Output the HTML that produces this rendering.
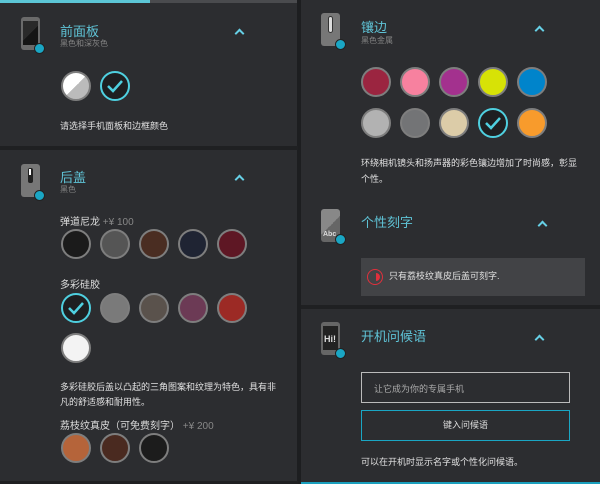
<!DOCTYPE html>
<html><head><meta charset="utf-8"><style>
*{margin:0;padding:0;box-sizing:border-box}
body{width:600px;height:484px;background:#2c2d30;font-family:"Liberation Sans","Noto Sans CJK SC",sans-serif;position:relative;overflow:hidden;color:#ddd}
.a{position:absolute;white-space:nowrap}
.t{color:#5fc3d6;font-size:13px}
.s{color:#858585;font-size:8px}
.p{font-size:9px;color:#e0e0e0}
.c{position:absolute;width:30px;height:30px;border-radius:50%;border:2px solid #7e7e7e}
.sel{border:2px solid #4fd0e0;background:#1e1f21}
.chev{position:absolute;width:7px;height:7px;border-left:2.5px solid #66d0e6;border-top:2.5px solid #66d0e6;transform:rotate(45deg)}
.badge{position:absolute;width:11px;height:11px;border-radius:50%;background:#1aa6c4;border:1px solid #222}
.ph{position:absolute;width:19px;height:33px;background:#6a6a6a;border-radius:3px}
</style></head><body>
<div class="a" style="left:0;top:0;width:298px;height:3px;background:#4a4b4e"></div>
<div class="a" style="left:0;top:0;width:150px;height:3px;background:#5cc6d6"></div>
<div class="a" style="left:297px;top:0;width:4px;height:484px;background:#1d1e20"></div>
<div class="a" style="left:0;top:146px;width:298px;height:4px;background:#1f2022"></div>
<div class="a" style="left:0;top:481px;width:298px;height:3px;background:#1f2022"></div>

<!-- left sec 1 -->
<div class="ph" style="left:21px;top:17px"><div style="position:absolute;left:2px;top:4px;width:15px;height:24px;background:linear-gradient(135deg,#2a2a2a 50%,#151515 50%)"></div></div>
<div class="badge" style="left:34px;top:43px"></div>
<div class="a t" style="left:60px;top:21px">前面板</div>
<div class="a s" style="left:60px;top:38px">黑色和深灰色</div>
<div class="chev" style="left:236px;top:30px"></div>
<div class="c" style="left:61px;top:71px;background:linear-gradient(135deg,#fff 50%,#bbb 50%)"></div>
<div class="c sel" style="left:100px;top:71px"></div>
<svg class="a" style="left:100px;top:71px" width="30" height="30"><path d="M8 15l5 5 9-10" stroke="#4fd0e0" stroke-width="2.5" fill="none"/></svg>
<div class="a p" style="left:60px;top:119px">请选择手机面板和边框颜色</div>

<!-- left sec 2 -->
<div class="ph" style="left:21px;top:164px;background:#777"><div style="position:absolute;left:7px;top:4px;width:5px;height:15px;background:#222;border-radius:2px"></div><div style="position:absolute;left:8px;top:5px;width:2px;height:6px;background:#fff"></div></div>
<div class="badge" style="left:34px;top:190px"></div>
<div class="a t" style="left:60px;top:167px">后盖</div>
<div class="a s" style="left:60px;top:184px">黑色</div>
<div class="chev" style="left:236px;top:176px"></div>
<div class="a" style="left:60px;top:213px;font-size:10px;color:#ddd">弹道尼龙 <span style="color:#888">+¥ 100</span></div>
<div class="c" style="left:61px;top:229px;background:#1b1b1b"></div>
<div class="c" style="left:100px;top:229px;background:#555"></div>
<div class="c" style="left:139px;top:229px;background:#4a2d22"></div>
<div class="c" style="left:178px;top:229px;background:#1f2433"></div>
<div class="c" style="left:217px;top:229px;background:#5e1724"></div>
<div class="a" style="left:60px;top:276px;font-size:10px;color:#ddd">多彩硅胶</div>
<div class="c sel" style="left:61px;top:293px"></div>
<svg class="a" style="left:61px;top:293px" width="30" height="30"><path d="M8 15l5 5 9-10" stroke="#4fd0e0" stroke-width="2.5" fill="none"/></svg>
<div class="c" style="left:100px;top:293px;background:#7a7a7a"></div>
<div class="c" style="left:139px;top:293px;background:#5a524c"></div>
<div class="c" style="left:178px;top:293px;background:#6c3a55"></div>
<div class="c" style="left:217px;top:293px;background:#9c2a25"></div>
<div class="c" style="left:61px;top:333px;background:#f3f3f3"></div>
<div class="a p" style="left:60px;top:380px;line-height:15px">多彩硅胶后盖以凸起的三角图案和纹理为特色，具有非<br>凡的舒适感和耐用性。</div>
<div class="a" style="left:60px;top:417px;font-size:10px;color:#ddd">荔枝纹真皮（可免费刻字） <span style="color:#888">+¥ 200</span></div>
<div class="c" style="left:61px;top:433px;background:#b5643a"></div>
<div class="c" style="left:100px;top:433px;background:#4a2a20"></div>
<div class="c" style="left:139px;top:433px;background:#1c1c1c"></div>

<!-- right sec 1 -->
<div class="ph" style="left:321px;top:13px;background:#777"><div style="position:absolute;left:7px;top:3px;width:5px;height:17px;background:#ddd;border-radius:3px;border:1px solid #333"></div></div>
<div class="badge" style="left:335px;top:39px"></div>
<div class="a t" style="left:361px;top:17px">镶边</div>
<div class="a s" style="left:361px;top:35px">黑色金属</div>
<div class="chev" style="left:536px;top:27px"></div>
<div class="c" style="left:361px;top:67px;background:#9b2540"></div>
<div class="c" style="left:400px;top:67px;background:#f7819f"></div>
<div class="c" style="left:439px;top:67px;background:#a3318e"></div>
<div class="c" style="left:478px;top:67px;background:#d7e206"></div>
<div class="c" style="left:517px;top:67px;background:#0084cb"></div>
<div class="c" style="left:361px;top:108px;background:#b2b2b2"></div>
<div class="c" style="left:400px;top:108px;background:#737476"></div>
<div class="c" style="left:439px;top:108px;background:#dccca8"></div>
<div class="c sel" style="left:478px;top:108px"></div>
<svg class="a" style="left:478px;top:108px" width="30" height="30"><path d="M8 15l5 5 9-10" stroke="#4fd0e0" stroke-width="2.5" fill="none"/></svg>
<div class="c" style="left:517px;top:108px;background:#f89b2c"></div>
<div class="a p" style="left:361px;top:155px;line-height:16px">环绕相机镜头和扬声器的彩色镶边增加了时尚感，彰显<br>个性。</div>

<!-- right sec 2 -->
<div class="ph" style="left:321px;top:209px;background:linear-gradient(135deg,#888 50%,#666 50%)"><div style="position:absolute;left:2px;top:22px;font-size:7px;color:#ddd;font-weight:bold">Abc</div></div>
<div class="badge" style="left:335px;top:234px"></div>
<div class="a t" style="left:361px;top:212px">个性刻字</div>
<div class="chev" style="left:539px;top:222px"></div>
<div class="a" style="left:361px;top:258px;width:224px;height:38px;background:#424346"></div>
<div class="a" style="left:367px;top:269px;width:16px;height:16px;border-radius:50%;border:1.5px solid #e0303c"></div>
<div class="a" style="left:376px;top:273px;width:4px;height:8px;background:#e0303c;border-radius:0 4px 4px 0"></div>
<div class="a" style="left:389px;top:269px;font-size:9px;color:#e0e0e0">只有荔枝纹真皮后盖可刻字.</div>
<div class="a" style="left:301px;top:305px;width:299px;height:4px;background:#1f2022"></div>

<!-- right sec 3 -->
<div class="ph" style="left:321px;top:322px;background:#666"><div style="position:absolute;left:2px;top:4px;width:15px;height:24px;background:#222"></div><div style="position:absolute;left:3px;top:12px;font-size:9px;color:#ddd;font-weight:bold">Hi!</div></div>
<div class="badge" style="left:335px;top:348px"></div>
<div class="a t" style="left:361px;top:326px">开机问候语</div>
<div class="chev" style="left:536px;top:336px"></div>
<div class="a" style="left:361px;top:372px;width:209px;height:31px;border:1.5px solid #bbb"></div>
<div class="a" style="left:374px;top:382px;font-size:9px;color:#aaa">让它成为你的专属手机</div>
<div class="a" style="left:361px;top:410px;width:209px;height:31px;border:1.5px solid #1aa6c4;text-align:center;line-height:28px;font-size:9px;color:#ddd">键入问候语</div>
<div class="a p" style="left:361px;top:455px">可以在开机时显示名字或个性化问候语。</div>
<div class="a" style="left:301px;top:482px;width:299px;height:2px;background:#1a9fbd"></div>
</body></html>
